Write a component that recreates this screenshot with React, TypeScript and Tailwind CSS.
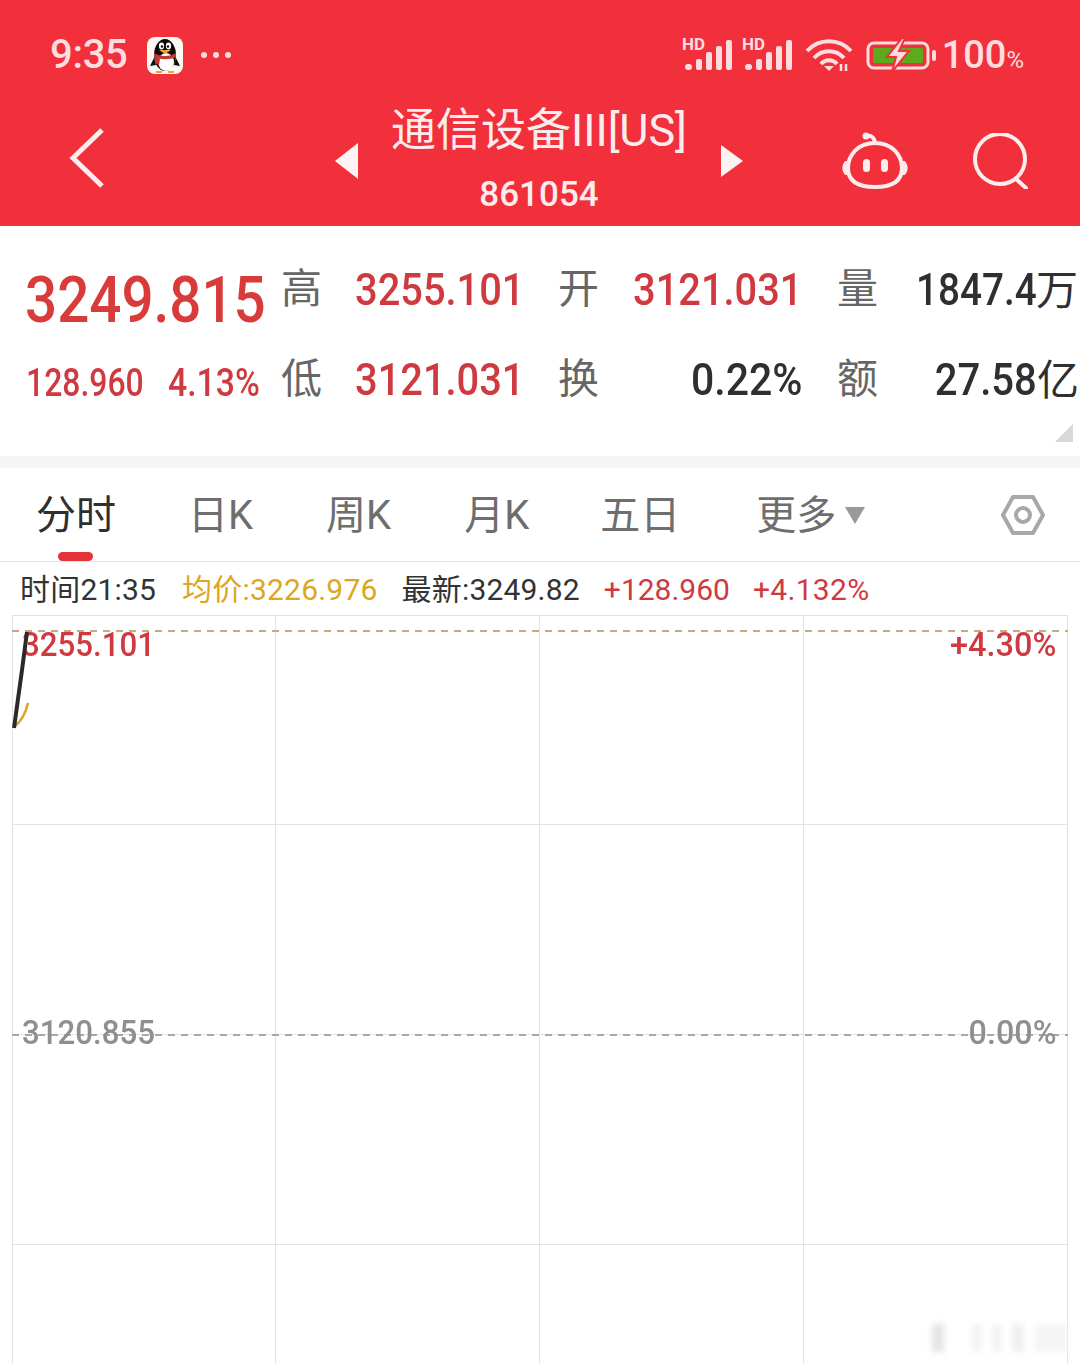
const CJK = "font-['Roboto','Noto_Sans_CJK_SC',sans-serif]";

function SignalIcon() {
  return (
    <svg viewBox="0 0 50 34" className="h-[34px] w-[50px] -translate-y-px overflow-visible" aria-hidden>
      <text x="0" y="13" fontSize="17" fontWeight="700" fill="#fbdde0" fontFamily="Roboto, sans-serif">HD</text>
      <rect x="3" y="27" width="7" height="6" rx="3" fill="#fbdde0" />
      <rect x="14" y="22" width="6" height="11" rx="2" fill="#fbdde0" />
      <rect x="24" y="15" width="6" height="18" rx="2" fill="#fbdde0" />
      <rect x="34" y="9" width="6" height="24" rx="2" fill="#fbdde0" />
      <rect x="44" y="3" width="6" height="30" rx="2" fill="#fbdde0" />
    </svg>
  );
}

function WifiIcon() {
  return (
    <svg viewBox="0 0 48 34" className="h-[34px] w-[48px]" fill="none" stroke="#fbdde0" strokeWidth="4" aria-hidden>
      <path d="M2 13 C14 0 34 0 46 13" />
      <path d="M9 20 C17 11 31 11 39 20" />
      <path d="M16 26 C20 21 28 21 32 26" />
      <path d="M19 28 L24 33 L29 28 Z" fill="#fbdde0" stroke="none" />
      <path d="M36 26 V33 M41 33 V26" strokeWidth="2.5" />
    </svg>
  );
}

function BatteryIcon() {
  return (
    <svg viewBox="0 0 70 34" className="h-[34px] w-[70px]" aria-hidden>
      <rect x="2" y="5" width="60" height="25" rx="6" fill="none" stroke="#fbdde0" strokeWidth="3" />
      <rect x="7" y="10" width="50" height="15" rx="2" fill="#5bab1c" />
      <path d="M36 0 L21 19 L30 19 L26 34 L43 13 L33 13 L39 0 Z" fill="#fbdde0" stroke="#f1303b" strokeWidth="2" />
      <rect x="66" y="12" width="4" height="11" rx="2" fill="#fbdde0" />
    </svg>
  );
}

function QQIcon() {
  return (
    <svg viewBox="0 0 36 37" className="h-[37px] w-[36px]" aria-hidden>
      <rect width="36" height="37" rx="8" fill="#fdf8f0" />
      <ellipse cx="18" cy="18" rx="11" ry="16" fill="#0a0a0a" />
      <path d="M7 21 L3 29 L9 28 Z M29 21 L33 29 L27 28 Z" fill="#0a0a0a" />
      <ellipse cx="19" cy="25" rx="8" ry="9" fill="#fff" />
      <path d="M7 16 C13 20 23 20 29 16 L29 20 C24 23 12 23 7 20 Z" fill="#c4362f" />
      <path d="M8 20 L13 22 L12 28 L8 26 Z" fill="#c4362f" />
      <ellipse cx="14.5" cy="9" rx="2.6" ry="3.4" fill="#fff" />
      <ellipse cx="21.5" cy="9" rx="2.6" ry="3.4" fill="#fff" />
      <circle cx="15" cy="9.5" r="1.2" fill="#000" />
      <circle cx="21" cy="9.5" r="1.2" fill="#000" />
      <path d="M12 13 H24 L18 17 Z" fill="#e8a63a" />
      <path d="M9 35 H15 M21 35 H27" stroke="#e8a63a" strokeWidth="2" />
    </svg>
  );
}

function RobotIcon() {
  return (
    <svg viewBox="0 0 66 60" className="h-[60px] w-[66px]" fill="none" stroke="#fdeced" strokeWidth="4" aria-hidden>
      <path d="M25 5 C30 4 33 8 33 12" strokeLinecap="round" />
      <circle cx="24" cy="5" r="3.5" fill="#fdeced" stroke="none" />
      <path d="M33 12 C50 12 60 24 60 37 C60 50 50 56 33 56 C16 56 6 50 6 37 C6 24 16 12 33 12 Z" />
      <path d="M4 32 C2 35 2 39 4 42 M62 32 C64 35 64 39 62 42" strokeLinecap="round" />
      <rect x="21" y="28" width="7" height="13" rx="3.5" fill="#fdeced" stroke="none" />
      <rect x="39" y="28" width="7" height="13" rx="3.5" fill="#fdeced" stroke="none" />
    </svg>
  );
}

function SearchIcon() {
  return (
    <svg viewBox="0 0 58 56" className="h-[56px] w-[58px]" fill="none" stroke="#fdeced" strokeWidth="4" aria-hidden>
      <circle cx="28" cy="26" r="25" />
      <path d="M44 46 L54 55" strokeLinecap="round" />
    </svg>
  );
}

function StatusBar() {
  return (
    <div className="flex h-[96px] items-center pt-[14px] pl-[50px] pr-[56px]">
      <span className="text-[40px] leading-none font-medium tracking-[-0.3px] text-[#fcdde0]">9:35</span>
      <span className="ml-[19px]"><QQIcon /></span>
      <span className="ml-[18px] flex gap-[6px]">
        <i className="size-[6px] rounded-full bg-[#fcdde0]" />
        <i className="size-[6px] rounded-full bg-[#fcdde0]" />
        <i className="size-[6px] rounded-full bg-[#fcdde0]" />
      </span>
      <div className="ml-auto flex items-center">
        <SignalIcon />
        <span className="ml-[10px]"><SignalIcon /></span>
        <span className="ml-[13px]"><WifiIcon /></span>
        <span className="ml-[13px]"><BatteryIcon /></span>
        <span className="ml-[6px] text-[38px] leading-none font-medium text-[#fcdde0]">100</span>
        <span className="mt-[9px] text-[24px] leading-none text-[#fcdde0]">%</span>
      </div>
    </div>
  );
}

function TitleBar() {
  return (
    <div className="flex h-[130px] items-center">
      <svg viewBox="0 0 36 60" className="ml-[69px] h-[60px] w-[36px] -translate-y-[3px]" fill="none" stroke="#fdeced" strokeWidth="5" aria-hidden>
        <path d="M33 2 L4 30 L33 58" />
      </svg>
      <div className="ml-[230px] size-0 border-y-[18px] border-r-[23px] border-y-transparent border-r-[#fdf3f3]" />
      <div className="ml-[33px] flex w-[296px] flex-col items-center pb-[3px] text-[#fdeced]">
        <span className="text-[45px] leading-[54px] whitespace-nowrap">通信设备III[US]</span>
        <span className="mt-[17px] text-[35px] leading-[40px] font-medium">861054</span>
      </div>
      <div className="ml-[34px] size-0 border-y-[16px] border-l-[22px] border-y-transparent border-l-[#fdf3f3]" />
      <span className="ml-[99px]"><RobotIcon /></span>
      <span className="ml-[64px]"><SearchIcon /></span>
    </div>
  );
}

function Label({ text }: { text: string }) {
  return <span className="-ml-px text-[41px] leading-none text-[#666]">{text}</span>;
}

function QuoteValue({ value }: { value: string }) {
  return <span className="text-[45px] leading-none font-medium whitespace-nowrap">{value}</span>;
}

function QuotePanel() {
  const red = "text-[#cf3a40]";
  const dark = "text-[#2f2f2f]";
  const narrowLeft = "inline-block origin-left scale-x-[0.885]";
  return (
    <div className="relative h-[230px] bg-white">
      <div className="grid grid-cols-[257px_73px_204px_74px_205px_78px_164px] grid-rows-[90px_90px] items-center pt-[18px] pl-[25px]">
        <span className="mt-[22px] inline-block origin-left scale-x-[0.87] text-[65px] leading-none font-medium whitespace-nowrap text-[#d93a3a]">3249.815</span>
        <Label text="高" />
        <span className={`${narrowLeft} ${red}`}><QuoteValue value="3255.101" /></span>
        <Label text="开" />
        <span className={`${narrowLeft} ${red}`}><QuoteValue value="3121.031" /></span>
        <Label text="量" />
        <span className={`flex items-baseline ${dark}`}>
          <span className="inline-block w-[120px] origin-left scale-x-[0.86]"><QuoteValue value="1847.4" /></span>
          <span className="text-[42px] leading-none">万</span>
        </span>

        <span className="mt-[8px] ml-px flex text-[38px] leading-none font-medium whitespace-nowrap text-[#cf3a40]">
          <span className="inline-block w-[142px] origin-left scale-x-[0.84]">128.960</span>
          <span className="inline-block origin-left scale-x-[0.89]">4.13%</span>
        </span>
        <Label text="低" />
        <span className={`${narrowLeft} ${red}`}><QuoteValue value="3121.031" /></span>
        <Label text="换" />
        <span className={`justify-self-end pr-[36px] ${dark}`}>
          <span className="inline-block origin-right scale-x-[0.91]"><QuoteValue value="0.22%" /></span>
        </span>
        <Label text="额" />
        <span className={`flex items-baseline justify-self-end pr-px ${dark}`}>
          <span className="inline-block origin-right scale-x-[0.89]"><QuoteValue value="27.58" /></span>
          <span className="text-[42px] leading-none">亿</span>
        </span>
      </div>
      <svg viewBox="0 0 18 18" className="absolute right-[7px] bottom-[14px] size-[18px]" aria-hidden>
        <path d="M18 0 V18 H0 Z" fill="#d8d8d8" />
      </svg>
    </div>
  );
}

function Tabs() {
  return (
    <div className="relative flex h-[94px] items-center border-b border-[#e6e6e6] bg-white pt-[2px] pl-[36px] text-[40px] leading-none text-[#6e6e6e]">
      <span className="text-[#2f2f2f]">分时</span>
      <span className="ml-[72px]">日K</span>
      <span className="ml-[73px]">周K</span>
      <span className="ml-[73px]">月K</span>
      <span className="ml-[71px]">五日</span>
      <span className="ml-[76px]">更多</span>
      <span className="ml-[9px] size-0 border-x-[10px] border-t-[17px] border-x-transparent border-t-[#999]" />
      <svg viewBox="0 0 44 42" className="ml-[136px] h-[42px] w-[44px] -translate-y-px" fill="none" stroke="#a8a8a8" strokeWidth="4" aria-hidden>
        <path d="M12 3 H32 L42 21 L32 39 H12 L2 21 Z" strokeLinejoin="round" />
        <circle cx="22" cy="21" r="7" />
      </svg>
      <span className="absolute left-[58px] bottom-0 h-[9px] w-[35px] rounded-full bg-[#e5333b]" />
    </div>
  );
}

function InfoRow() {
  return (
    <div className="flex h-[53px] items-center bg-white pt-[2px] pl-[20px] text-[30px] leading-none whitespace-nowrap">
      <span className="tracking-[0.2px] text-[#333]">时间21:35</span>
      <span className="ml-[26px] tracking-[0.2px] text-[#dca71f]">均价:3226.976</span>
      <span className="ml-[24px] tracking-[0.2px] text-[#333]">最新:3249.82</span>
      <span className="ml-[24px] text-[#cf3a40]">+128.960</span>
      <span className="ml-[23px] tracking-[0.3px] text-[#cf3a40]">+4.132%</span>
    </div>
  );
}

function Chart() {
  const rowHeights = ["h-[209px]", "h-[210px]", "h-[210px]", "h-[120px]"];
  const label = "absolute inline-block text-[34px] leading-none font-medium";
  return (
    <div className="relative h-[749px] overflow-hidden bg-white pl-[12px] pr-[12px]">
      <div className="border-t border-r border-[#e3e3e3]">
        {rowHeights.map((h, i) => (
          <div key={i} className={`grid grid-cols-[263px_264px_264px_264px] border-b border-[#e3e3e3] ${h}`}>
            <div className="border-l border-[#e3e3e3]" />
            <div className="border-l border-[#e3e3e3]" />
            <div className="border-l border-[#e3e3e3]" />
            <div className="border-l border-[#e3e3e3]" />
          </div>
        ))}
      </div>
      <div className="absolute left-[12px] right-[12px] top-[15px] h-[2px] bg-[repeating-linear-gradient(90deg,#c4ab84_0_7px,transparent_7px_13px)]" />
      <div className="absolute left-[12px] right-[12px] top-[419px] h-[2px] bg-[repeating-linear-gradient(90deg,#a8a8a8_0_7px,transparent_7px_13px)]" />
      <span className={`${label} left-[22px] top-[12px] origin-left scale-x-[0.92] text-[#cf3a40]`}>3255.101</span>
      <span className={`${label} right-[24px] top-[12px] origin-right scale-x-[0.955] text-[#cf3a40]`}>+4.30%</span>
      <span className={`${label} left-[22px] top-[400px] origin-left scale-x-[0.92] text-[#8f8f8f]`}>3120.855</span>
      <span className={`${label} right-[24px] top-[400px] origin-right scale-x-[0.95] text-[#8f8f8f]`}>0.00%</span>
      <svg viewBox="0 0 20 100" className="absolute left-[12px] top-[15px] h-[100px] w-[20px]" fill="none" aria-hidden>
        <path d="M3 96 C8 92 13 86 16 73" stroke="#dca71f" strokeWidth="2.5" />
        <path d="M2 98 L10 40 L15 2" stroke="#2a2a2a" strokeWidth="4" />
      </svg>
      {/* faint blurred watermark, bottom right */}
      <div className="absolute right-[12px] bottom-[12px] flex h-[28px] items-stretch gap-[10px] blur-[3px]">
        <span className="w-[12px] bg-[#e4e4e4]" />
        <span className="ml-[18px] w-[10px] bg-[#f3f3f3]" />
        <span className="w-[10px] bg-[#f3f3f3]" />
        <span className="w-[12px] bg-[#efefef]" />
        <span className="w-[34px] bg-[#f5f5f5]" />
      </div>
    </div>
  );
}

export default function App() {
  return (
    <div className={`h-[1364px] w-[1080px] overflow-hidden bg-white ${CJK}`}>
      <div className="bg-[#f1303b]">
        <StatusBar />
        <TitleBar />
      </div>
      <QuotePanel />
      <div className="h-[12px] bg-[#f5f5f5]" />
      <Tabs />
      <InfoRow />
      <Chart />
    </div>
  );
}
